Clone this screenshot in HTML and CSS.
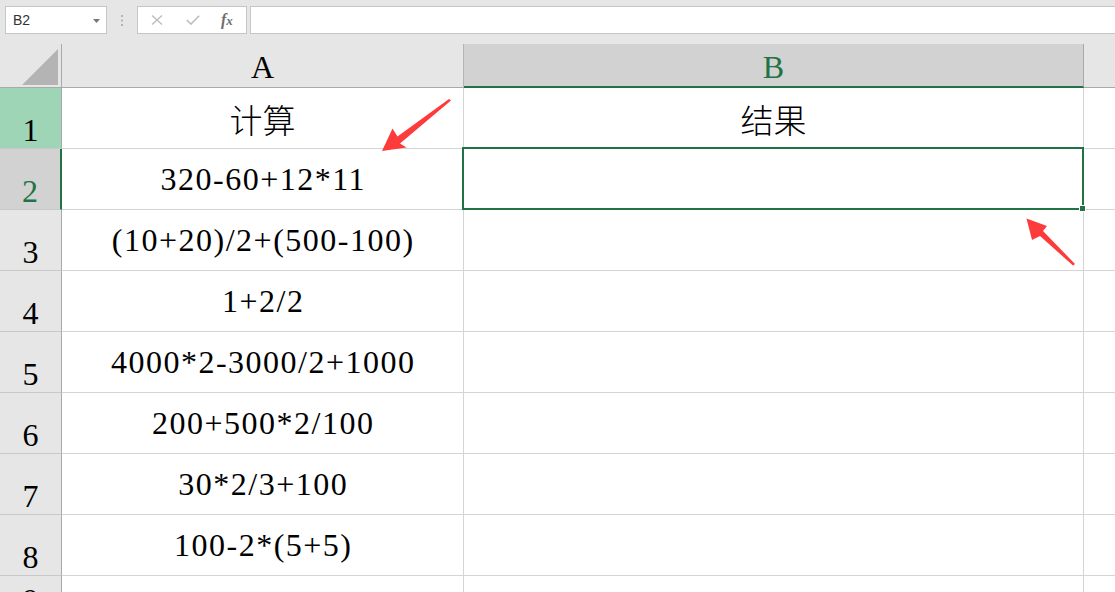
FILE: index.html
```html
<!DOCTYPE html>
<html lang="zh-CN">
<head>
<meta charset="utf-8">
<title>Sheet</title>
<link rel="stylesheet" href="styles.css">
</head>
<body>
<div class="app">
  <div class="fbar">
    <div class="namebox">
      <span class="nb-text">B2</span>
      <svg class="caret" width="7" height="4" viewBox="0 0 7 4"><path d="M0 0H7L3.5 4Z" fill="#777"/></svg>
    </div>
    <div class="sep">
      <svg width="3" height="11" viewBox="0 0 3 11"><rect x="0" y="0" width="2" height="2" fill="#b3b3b3"/><rect x="0" y="4.5" width="2" height="2" fill="#b3b3b3"/><rect x="0" y="9" width="2" height="2" fill="#b3b3b3"/></svg>
    </div>
    <div class="fxbox">
      <svg class="ico" width="12" height="10" viewBox="0 0 12 10"><path d="M1 0.5L11 9.5M11 0.5L1 9.5" stroke="#bdbdbd" stroke-width="1.4" fill="none"/></svg>
      <svg class="ico" width="14" height="10" viewBox="0 0 14 10"><path d="M0.8 5.2L5 9L13.2 0.8" stroke="#bdbdbd" stroke-width="1.6" fill="none"/></svg>
      <span class="fx">f<span class="fx-x">x</span></span>
    </div>
    <div class="finput"></div>
  </div>

  <div class="sheet">
    <div class="corner"><svg width="36" height="36" viewBox="0 0 36 36"><path d="M36 0V36H0Z" fill="#b4b4b4"/></svg></div>
    <div class="ch">A</div>
    <div class="ch ch-sel">B</div>
    <div class="ch ch-last"></div>

    <div class="rh rh-hl">1</div>
    <div class="c"><span class="cjk">计算</span></div>
    <div class="c"><span class="cjk">结果</span></div>
    <div class="c c-last"></div>

    <div class="rh rh-sel">2</div>
    <div class="c"><span class="num">320-60+12*11</span></div>
    <div class="c c-active"><div class="selbox"><div class="handle"></div></div></div>
    <div class="c c-last"></div>

    <div class="rh">3</div>
    <div class="c"><span class="num">(10+20)/2+(500-100)</span></div>
    <div class="c"></div>
    <div class="c c-last"></div>

    <div class="rh">4</div>
    <div class="c"><span class="num">1+2/2</span></div>
    <div class="c"></div>
    <div class="c c-last"></div>

    <div class="rh">5</div>
    <div class="c"><span class="num">4000*2-3000/2+1000</span></div>
    <div class="c"></div>
    <div class="c c-last"></div>

    <div class="rh">6</div>
    <div class="c"><span class="num">200+500*2/100</span></div>
    <div class="c"></div>
    <div class="c c-last"></div>

    <div class="rh">7</div>
    <div class="c"><span class="num">30*2/3+100</span></div>
    <div class="c"></div>
    <div class="c c-last"></div>

    <div class="rh">8</div>
    <div class="c"><span class="num">100-2*(5+5)</span></div>
    <div class="c"></div>
    <div class="c c-last"></div>

    <div class="rh rh-part">9</div>
    <div class="c"></div>
    <div class="c"></div>
    <div class="c c-last"></div>
  </div>

  <svg class="arrows" width="1115" height="592" viewBox="0 0 1115 592">
    <polygon fill="#fe3b3b" points="451,100.5 449,99 397.5,136.5 392.5,128.5 382,151 406.5,147.5 400,143.5"/>
    <polygon fill="#fe3b3b" points="1075,264 1073,265.5 1040,236 1032,240 1026.5,218.5 1047,226 1043,231"/>
  </svg>
</div>
</body>
</html>
```

FILE: styles.css
```css
html, body {
  margin: 0;
  padding: 0;
  background: #ffffff;
  overflow: hidden;
}

.app {
  position: relative;
  width: 1115px;
  height: 592px;
  overflow: hidden;
  background: #ffffff;
}

/* ---------- formula bar ---------- */
.fbar {
  height: 44px;
  box-sizing: border-box;
  padding-top: 6px;
  background: #e6e6e6;
  display: flex;
  align-items: flex-start;
}

.namebox {
  margin-left: 5px;
  width: 102px;
  height: 28px;
  box-sizing: border-box;
  border: 1px solid #c6c6c6;
  background: #ffffff;
  display: flex;
  align-items: center;
  justify-content: space-between;
  padding: 0 6px 0 7px;
}

.nb-text {
  font-family: "Liberation Sans", Arial, sans-serif;
  font-size: 14px;
  color: #333333;
  letter-spacing: -0.2px;
}

.caret {
  display: block;
  margin-top: 1px;
}

.sep {
  width: 30px;
  height: 28px;
  display: flex;
  align-items: center;
  justify-content: center;
}

.sep svg {
  display: block;
  margin-left: 1px;
}

.fxbox {
  width: 110px;
  height: 28px;
  box-sizing: border-box;
  border: 1px solid #c6c6c6;
  background: #ffffff;
  display: flex;
  align-items: center;
  padding-left: 13px;
}

.fxbox .ico {
  display: block;
}

.fxbox .ico:first-child {
  margin-right: 23px;
}

.fx {
  margin-left: 21px;
  font-family: "Liberation Serif", "Times New Roman", serif;
  font-style: italic;
  font-weight: bold;
  font-size: 16px;
  color: #6e6e6e;
  line-height: 1;
}

.fx-x {
  font-size: 13px;
}

.finput {
  flex: 1;
  margin-left: 3px;
  height: 28px;
  box-sizing: border-box;
  border: 1px solid #c6c6c6;
  border-right: none;
  background: #ffffff;
}

/* ---------- sheet ---------- */
.sheet {
  display: grid;
  grid-template-columns: 62px 402px 620px 1fr;
  grid-template-rows: 44px repeat(8, 61px) 42px;
  font-family: "Liberation Serif", "Times New Roman", "Noto Sans CJK SC", serif;
  font-size: 32px;
  color: #000000;
}

.sheet > div {
  box-sizing: border-box;
  min-width: 0;
}

.corner {
  background: #e6e6e6;
  border-right: 1px solid #a9a9a9;
  border-bottom: 1px solid #a9a9a9;
  display: flex;
  align-items: flex-end;
  justify-content: flex-end;
  padding: 0 3px 2px 0;
}

.corner svg {
  display: block;
}

.ch {
  background: #e6e6e6;
  border-right: 1px solid #b4b4b4;
  border-bottom: 1px solid #a9a9a9;
  display: flex;
  align-items: center;
  justify-content: center;
  line-height: 32px;
  padding-top: 3px;
}

.ch-sel {
  background: #d2d2d2;
  border-right-color: #a9a9a9;
  border-bottom: 2px solid #217346;
  color: #217346;
  padding-top: 4px;
}

.ch-last {
  border-right: none;
}

.rh {
  background: #e6e6e6;
  border-right: 1px solid #a9a9a9;
  border-bottom: 1px solid #c8c8c8;
  display: flex;
  align-items: flex-end;
  justify-content: center;
  line-height: 32px;
  padding-bottom: 2px;
}

.rh-part {
  align-items: flex-start;
  padding-top: 8px;
  padding-bottom: 0;
  overflow: hidden;
}

.rh-hl {
  background: #9fd5b7;
}

.rh-sel {
  background: #d2d2d2;
  border-right: 2px solid #217346;
  color: #217346;
}

.c {
  border-right: 1px solid #d4d4d4;
  border-bottom: 1px solid #d4d4d4;
  display: flex;
  align-items: center;
  justify-content: center;
  line-height: 32px;
}

.c-last {
  border-right: none;
}

.num {
  letter-spacing: 1.5px;
  margin-right: -1.5px;
  white-space: nowrap;
}

.cjk {
  font-family: "Noto Sans CJK SC", sans-serif;
  font-weight: 300;
  font-size: 33px;
  line-height: 34px;
  margin-top: 2px;
}

.c-active {
  position: relative;
}

.selbox {
  position: absolute;
  left: -2px;
  top: -2px;
  width: calc(100% + 3px);
  height: calc(100% + 3px);
  box-sizing: border-box;
  border: 2px solid #217346;
}

.handle {
  position: absolute;
  right: -4px;
  bottom: -4px;
  width: 5px;
  height: 5px;
  background: #217346;
  border: 1px solid #ffffff;
}

/* ---------- annotation arrows ---------- */
.arrows {
  position: absolute;
  left: 0;
  top: 0;
  pointer-events: none;
}
```
